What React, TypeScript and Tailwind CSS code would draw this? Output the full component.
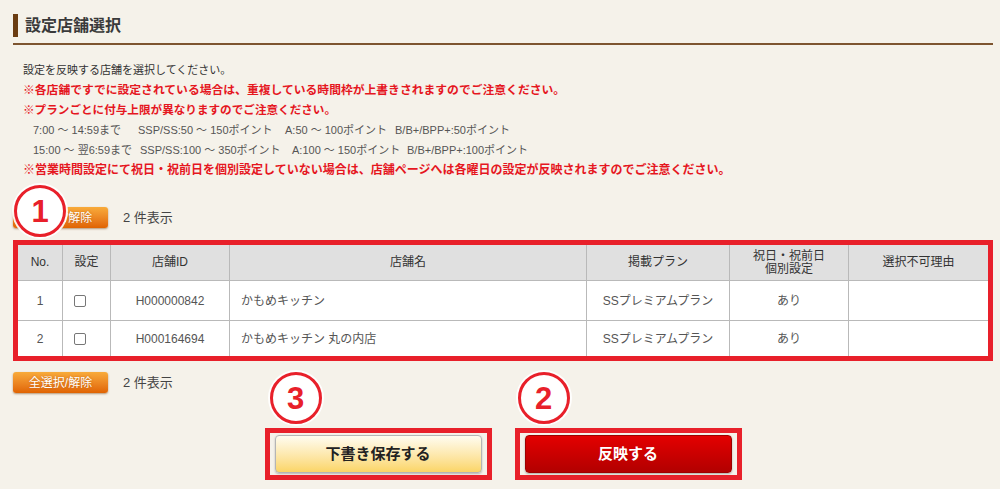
import React from "react";

const RED = "text-[#e5171f]";

function Circle({ n, className }: { n: string; className: string }) {
  return (
    <div
      className={`absolute flex h-[52px] w-[52px] items-center justify-center rounded-full border-[3px] border-[#e8202a] bg-white shadow-[0_0_0_2px_rgba(255,255,255,0.9)] ${className}`}
    >
      <span className="font-['Liberation_Sans',sans-serif] text-[31px] font-bold leading-none text-[#e8202a]">
        {n}
      </span>
    </div>
  );
}

function OrangeButton() {
  return (
    <div className="flex h-[21px] w-[95px] items-center justify-center rounded-[3px] bg-linear-to-b from-[#f8ab3a] to-[#e06300] text-[12px] text-white shadow-[0_1px_2px_rgba(120,60,0,0.5)] [text-shadow:0_0_2px_rgba(160,70,0,0.6)]">
      全選択/解除
    </div>
  );
}

function CountRow({ circle }: { circle?: boolean }) {
  return (
    <div className="relative flex items-center">
      <OrangeButton />
      <span className="ml-[15px] text-[13px] text-[#444]">2&nbsp;件表示</span>
      {circle && <Circle n="1" className="left-[1px] top-[-22px]" />}
    </div>
  );
}

const GRID =
  "grid grid-cols-[44px_48px_119px_357px_143px_119px_140px]";

function Checkbox() {
  return (
    <span className="inline-block h-[12px] w-[12px] rounded-[2px] border border-[#777] bg-white" />
  );
}

function Row({
  no,
  id,
  name,
  h,
}: {
  no: string;
  id: string;
  name: string;
  h: string;
}) {
  const cell = "flex items-center border-l border-[#b9b9b9]";
  return (
    <div className={`${GRID} ${h} border-t border-[#b9b9b9] bg-white text-[12px] text-[#555]`}>
      <div className="flex items-center justify-center">{no}</div>
      <div className={`${cell} pl-[11px]`}>
        <Checkbox />
      </div>
      <div className={`${cell} justify-center`}>{id}</div>
      <div className={`${cell} pl-[11px]`}>{name}</div>
      <div className={`${cell} justify-center`}>SSプレミアムプラン</div>
      <div className={`${cell} justify-center`}>あり</div>
      <div className={cell} />
    </div>
  );
}

export default function App() {
  const hcell =
    "flex items-center justify-center border-l border-[#b9b9b9] text-center";
  return (
    <div className="min-h-[489px] w-full bg-[#f5f2ea] font-['Liberation_Sans','Noto_Sans_CJK_JP',sans-serif] text-[#333]">
      <div className="w-[980px] pl-[13px] pt-[14px]" style={{ boxSizing: "content-box" }}>
        {/* heading */}
        <div className="border-b-2 border-[#7d5530] pb-[6px]">
          <div className="flex h-[23px] items-center">
            <div className="h-[23px] w-[5px] bg-[#6b3d12]" />
            <h1 className="ml-[7px] text-[16px] font-bold leading-none text-[#3a3a3a]">
              設定店舗選択
            </h1>
          </div>
        </div>

        {/* notes */}
        <div className="mt-[15px] pl-[10px] leading-[20px]">
          <p className="text-[11px] text-[#333]">
            設定を反映する店舗を選択してください。
          </p>
          <p className={`text-[11.8px] font-bold ${RED}`}>
            ※各店舗ですでに設定されている場合は、重複している時間枠が上書きされますのでご注意ください。
          </p>
          <p className={`text-[11.6px] font-bold ${RED}`}>
            ※プランごとに付与上限が異なりますのでご注意ください。
          </p>
          <div className="flex whitespace-nowrap pl-[10px] text-[11px] text-[#555]">
            <span className="w-[105px]">7:00 ～ 14:59まで</span>
            <span className="w-[147px]">SSP/SS:50 ～ 150ポイント</span>
            <span className="w-[110px]">A:50 ～ 100ポイント</span>
            <span>B/B+/BPP+:50ポイント</span>
          </div>
          <div className="flex whitespace-nowrap pl-[10px] text-[11px] text-[#555]">
            <span className="w-[107px]">15:00 ～ 翌6:59まで</span>
            <span className="w-[152px]">SSP/SS:100 ～ 350ポイント</span>
            <span className="w-[115px]">A:100 ～ 150ポイント</span>
            <span>B/B+/BPP+:100ポイント</span>
          </div>
          <p className={`text-[12px] font-bold ${RED}`}>
            ※営業時間設定にて祝日・祝前日を個別設定していない場合は、店舗ページへは各曜日の設定が反映されますのでご注意ください。
          </p>
        </div>

        {/* top count */}
        <div className="mt-[27px]">
          <CountRow circle />
        </div>

        {/* table */}
        <div className="mt-[12px] border-[5px] border-[#e8202a]">
          <div className={`${GRID} h-[35px] bg-[#e0e0e0] text-[12px] leading-[13px] text-[#333]`}>
            <div className="flex items-center justify-center">No.</div>
            <div className={hcell}>設定</div>
            <div className={hcell}>店舗ID</div>
            <div className={hcell}>店舗名</div>
            <div className={hcell}>掲載プラン</div>
            <div className={`${hcell} flex-col`}>
              <span>祝日・祝前日</span>
              <span>個別設定</span>
            </div>
            <div className={hcell}>選択不可理由</div>
          </div>
          <Row no="1" id="H000000842" name="かもめキッチン" h="h-[40px]" />
          <Row no="2" id="H000164694" name="かもめキッチン 丸の内店" h="h-[36px]" />
        </div>

        {/* bottom count */}
        <div className="mt-[11px]">
          <CountRow />
        </div>

        {/* actions */}
        <div className="mt-[35px] flex justify-center gap-[23px]">
          <div className="relative border-[5px] border-[#e8202a] px-[5px] py-[2px]">
            <Circle n="3" className="left-[0px] top-[-61px]" />
            <button className="flex h-[38px] w-[207px] items-center justify-center rounded-[4px] border border-[#b5b5b5] bg-linear-to-b from-[#fffcf0] to-[#fbd565] text-[15px] font-bold text-[#222] shadow-[0_1px_2px_rgba(0,0,0,0.25)]">
              下書き保存する
            </button>
          </div>
          <div className="relative border-[5px] border-[#e8202a] px-[5px] py-[2px]">
            <Circle n="2" className="left-[-2px] top-[-61px]" />
            <button className="flex h-[38px] w-[207px] items-center justify-center rounded-[4px] border border-[#9e0000] bg-linear-to-b from-[#e40000] to-[#b20000] text-[15px] font-bold text-white shadow-[0_1px_2px_rgba(0,0,0,0.3)]">
              反映する
            </button>
          </div>
        </div>
      </div>
    </div>
  );
}
